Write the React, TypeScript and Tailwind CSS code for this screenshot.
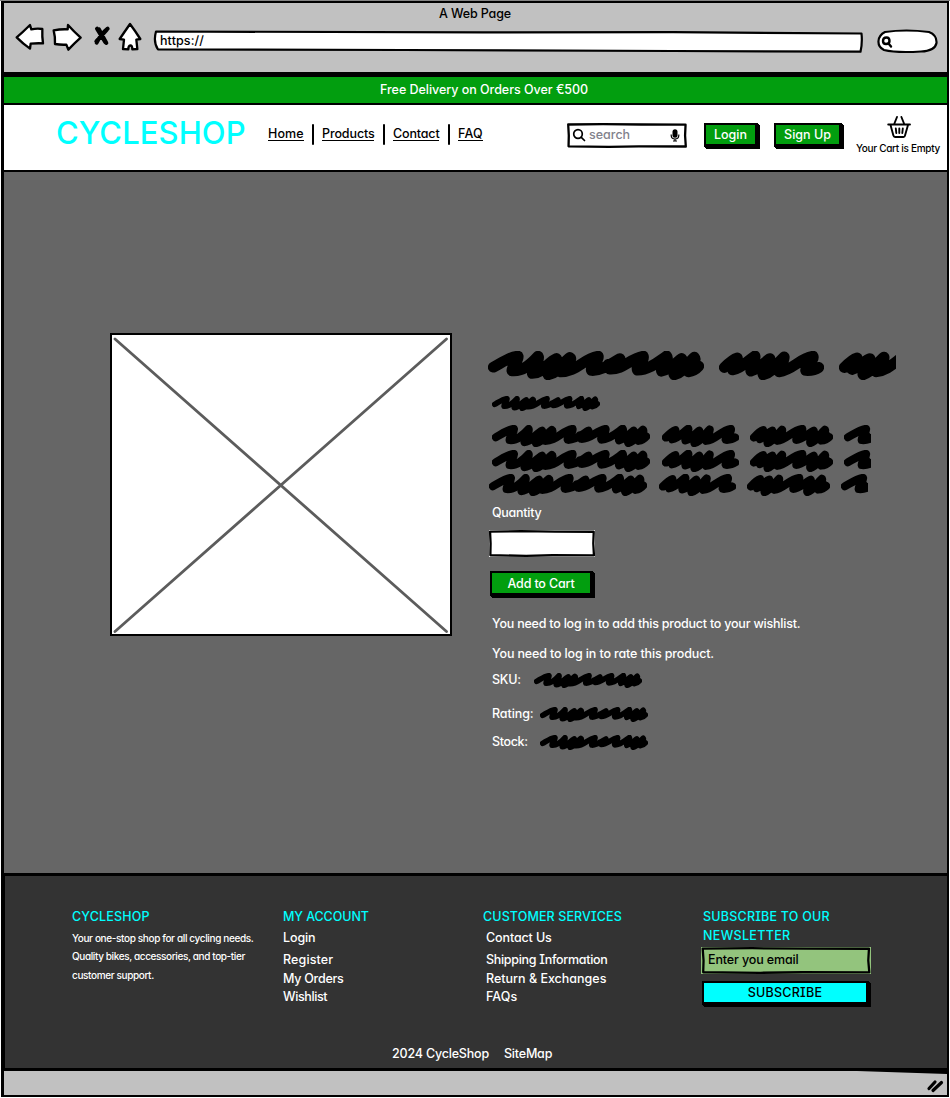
import type { ReactNode } from "react";

function T({ children, className = "" }: { children: string; className?: string }) {
  return <span className={`-mb-px block w-max shrink-0 whitespace-pre pt-px leading-4 ${className}`}>{children}</span>;
}

function Small({ children, className = "" }: { children: string; className?: string }) {
  return <span className={`block w-max shrink-0 whitespace-pre text-[10px] leading-4 ${className}`}>{children}</span>;
}

function Sketch({ fill = "#fff", className = "", children }: { fill?: string; className?: string; children?: ReactNode }) {
  return (
    <div className={`relative shrink-0 ${className}`}>
      <svg className="absolute inset-0 size-full overflow-visible" viewBox="0 0 100 100" preserveAspectRatio="none">
        <path
          d="M1 6 L30 4.5 L62 6 L98.800 6.500 L98.400 50 L99 94 L60 93.500 L35 95.500 L1.300 93.500 L1.500 50 Z"
          fill={fill}
          stroke="#000"
          strokeWidth="2.3"
          strokeLinejoin="round"
          vectorEffect="non-scaling-stroke"
        />
      </svg>
      <div className="relative flex h-full">{children}</div>
    </div>
  );
}

const WORDS = {
  long: {
    box: "25 47 647 88",
    d: "M41 96 C70 80 95 63 115 63 C118 75 95 95 97 107 C130 110 155 85 175 63 C182 75 155 105 158 115 C190 115 205 80 230 70 C240 85 200 105 205 119 C235 115 250 80 270 67 C285 75 235 100 240 110 C290 112 310 70 355 63 C358 80 330 90 335 106 C370 108 400 80 420 70 C425 85 385 95 390 102 C430 104 450 70 490 63 C495 80 465 90 473 105 C510 105 540 75 560 62 C570 75 540 95 545 108 C575 100 590 80 605 70 C615 80 575 105 583 119 C610 115 625 80 643 66 C655 80 615 100 625 110 C640 108 650 100 656 93 M175 94 L262 92 M552 88 L650 92 M385 88 L415 84",
  },
  medium: {
    box: "57 47 316 88",
    d: "M73 97 C90 80 105 70 112 68 C115 80 95 95 98 104 C125 100 145 75 165 62 C170 75 150 95 153 108 C180 100 195 80 210 70 C215 85 185 105 190 119 C220 112 235 80 253 65 C255 80 235 95 238 110 C280 105 300 68 340 63 C345 75 315 95 318 106 C335 107 350 102 357 97 M90 92 L115 86 M155 90 L245 90",
  },
  cut: {
    box: "418 47 170 88",
    d: "M434 97 C450 80 465 70 472 68 C475 80 455 95 457 103 C480 95 495 75 510 70 C515 85 485 105 490 119 C515 112 535 80 552 66 C555 80 525 95 530 110 C560 105 575 90 604 68 M450 92 L545 90",
  },
  double: {
    box: "0 47 341 88",
    d: "M16 97 C32 80 47 70 54 68 C57 80 39 95 41 103 C62 95 77 75 92 70 C97 85 67 105 72 119 C97 112 117 80 132 66 C137 80 107 95 112 110 C150 105 175 68 215 63 C218 78 190 90 190 106 C215 106 240 80 262 70 C268 85 240 105 248 119 C275 112 290 80 308 66 C316 80 285 98 292 109 C305 108 318 102 325 95 M32 92 L125 90 M240 92 L315 90",
  },
  stub: {
    box: "25 47 112 88",
    d: "M41 96 C70 80 95 63 115 63 C118 75 95 95 97 107 C115 109 130 104 145 95 M105 96 L118 92",
  },
};

function Scribble({ word, className }: { word: keyof typeof WORDS; className: string }) {
  return (
    <svg viewBox={WORDS[word].box} preserveAspectRatio="none" className={`block shrink-0 overflow-hidden ${className}`}>
      <path d={WORDS[word].d} fill="none" stroke="#000" strokeWidth="33" strokeLinecap="round" strokeLinejoin="round" />
    </svg>
  );
}

function TextRow({ className = "" }: { className?: string }) {
  return (
    <div className={`flex h-[22px] ${className}`}>
      <Scribble word="long" className="h-[22px] w-[158px]" />
      <Scribble word="medium" className="ml-[11.5px] h-[22px] w-[77px]" />
      <Scribble word="double" className="ml-[11px] h-[22px] w-[83px]" />
      <Scribble word="stub" className="ml-[11px] h-[22px] w-[27.5px]" />
    </div>
  );
}

function Button({ className, fill, children }: { className: string; fill: string; children: ReactNode }) {
  return (
    <div className={`flex shrink-0 justify-center border-2 border-b-[3px] border-r-[3px] border-black shadow-[1px_1px_0_#000,2px_2px_0_#000] ${fill} ${className}`}>
      {children}
    </div>
  );
}

function NavLink({ className, children }: { className: string; children: string }) {
  return (
    <a className={`mt-5 block h-4 shrink-0 whitespace-pre border-b border-black pt-px leading-[15px] ${className}`}>{children}</a>
  );
}

function Divider({ className }: { className: string }) {
  return <div className={`mt-[19px] h-[21px] w-[2px] shrink-0 rounded bg-black ${className}`} />;
}

function Chrome() {
  return (
    <div className="flex h-[69px] flex-col bg-[#c1c1c1]">
      <T className="ml-[435px] mt-[2px] tracking-[-0.12px]">A Web Page</T>
      <div className="flex">
        <svg className="ml-[10px] mt-[1px] h-[32px] w-[132px] shrink-0" viewBox="42 66 396 96" fill="#fff" stroke="#000" strokeWidth="7" strokeLinejoin="round" strokeLinecap="round">
          <path d="M50 112 Q68 97 90 75 L94 88 Q112 84 127 87 Q126 110 129 130 Q110 129 92 131 L90 146 Q70 132 50 112Z" />
          <path d="M161 91 Q182 87 203 88 L204 75 Q222 95 242 113 Q225 128 205 149 L199 134 Q182 135 165 132 Q166 110 161 91Z" />
          <path d="M291 86 L316 127 M323 86 Q303 102 290 128 M297 88 L319 129 M320 90 L289 124" strokeWidth="12" fill="none" />
          <path d="M390 72 Q405 92 421 117 L409 119 L412 147 L397 148 Q397 136 391 136 Q385 137 385 148 L369 147 L372 119 L359 117 Q374 95 390 72Z" />
        </svg>
        <div className="relative ml-[7px] mt-[8px] h-[24px] w-[710px] shrink-0">
          <svg className="absolute inset-0" width="710" height="24" fill="#fff" stroke="#000" strokeWidth="2.200" strokeLinejoin="round">
            <path d="M3 2.500 L330 3.400 L520 3.200 L708.500 4.500 Q709.500 14 707.500 22.700 L520 22 L250 21 L5 20.500 Q0 13 3 2.500Z" />
          </svg>
          <T className="relative ml-[7px] mt-[3px] tracking-[0.1px]">https://</T>
        </div>
        <svg className="ml-[13px] mt-[7px] h-[26px] w-[62px] shrink-0" viewBox="0 0 62 26" fill="#fff" stroke="#000" strokeWidth="2.200">
          <path d="M9 4 Q30 1 53 4 Q61 7 60.500 15 Q59 23 45 23.500 Q20 25 8 22 Q2 19 2.500 13 Q3 7 9 4Z" />
          <path d="M7 13 Q7 9.500 10.500 9.500 Q13.500 9.500 13.500 13 Q13.500 16 10 16 Q7 16 7 13Z M12.500 15.500 L15 18.500" strokeWidth="2.400" strokeLinecap="round" />
        </svg>
      </div>
    </div>
  );
}

function Header() {
  return (
    <header className="flex h-[65px] items-start bg-white">
      <div className="ml-[52px] mt-[12px] w-[190px] shrink-0 whitespace-pre text-[31px] leading-8 tracking-[0.08px] text-[#00ffff]">CYCLESHOP</div>
      <nav className="ml-[22px] flex items-start">
        <NavLink className="w-[36px] tracking-[0.1px]">Home</NavLink>
        <Divider className="ml-[8px]" />
        <NavLink className="ml-[8px] w-[52px] tracking-[-0.1px]">Products</NavLink>
        <Divider className="ml-[9px]" />
        <NavLink className="ml-[8px] w-[46px] tracking-[-0.15px]">Contact</NavLink>
        <Divider className="ml-[9px]" />
        <NavLink className="ml-[8px] w-[25px] tracking-[0.2px]">FAQ</NavLink>
      </nav>
      <div className="ml-auto flex items-start pr-[7px]">
        <Sketch className="mt-[18px] h-[25px] w-[120px]">
          <svg className="ml-[5px] mt-[5px] size-[14px] shrink-0" viewBox="0 0 14 14" fill="none" stroke="#000" strokeWidth="1.700" strokeLinecap="round">
            <circle cx="6" cy="6" r="4.300" />
            <path d="M9.300 9.300 L12.500 12.500" />
          </svg>
          <T className="ml-[3px] mt-[3px] text-[#82828c]">search</T>
          <svg className="absolute right-[7px] top-[6px] h-[13px] w-[10px]" viewBox="0 0 10 13">
            <rect x="2.500" y="0.300" width="5" height="8.400" rx="2.500" />
            <path d="M1.200 5.500 V6.500 Q1.300 10 5 10 Q8.700 10 8.800 6.500 V5.500 M5 10 V12 M3 12 H7" fill="none" stroke="#000" strokeWidth="1.200" />
          </svg>
        </Sketch>
        <Button fill="bg-[#029e0f]" className="ml-[17px] mt-[18px] h-6 w-[54px]">
          <T className="mt-px text-white">Login</T>
        </Button>
        <Button fill="bg-[#029e0f]" className="ml-[16px] mt-[18px] h-6 w-[68px]">
          <T className="mt-px text-white">Sign Up</T>
        </Button>
        <div className="ml-[14px] flex w-[84px] flex-col items-center">
          <svg className="ml-[2px] mt-[10px] h-[24px] w-[26px]" viewBox="0 0 26 24" fill="none" stroke="#000" strokeWidth="1.900" strokeLinecap="round" strokeLinejoin="round">
            <path d="M2.200 9.500 H24 M4.500 10 L7.400 20.600 Q7.800 22 9 22 H17.500 Q18.700 22 19 20.600 L22 10 M8.200 9 L11 2 M18.200 9 L15.400 2 M9.800 13.500 L10.300 18 M13.300 13.500 V18 M16.800 13.500 L16.300 18" />
          </svg>
          <Small className="mt-px tracking-[-0.3px]">Your Cart is Empty</Small>
        </div>
      </div>
    </header>
  );
}

function Detail({ label, className }: { label: string; className: string }) {
  return (
    <div className="ml-1 flex h-4 items-start">
      <div className={`shrink-0 ${className}`}>
        <T>{label}</T>
      </div>
      <Scribble word="long" className="mt-[2px] h-[15px] w-[108px]" />
    </div>
  );
}

function Product() {
  return (
    <main className="flex h-[701px] bg-[#666666]">
      <div className="ml-[106px] mt-[161px] h-[303px] w-[342px] shrink-0 border-2 border-black bg-white">
        <svg className="size-full" viewBox="0 0 338 299" stroke="#5c5c5c" strokeWidth="2.800" strokeLinecap="round">
          <path d="M3 4 L334.500 296.500 M334.500 4 L3 296.500" />
        </svg>
      </div>
      <section className="ml-[36px] flex flex-col pt-[179px] text-white">
        <div className="flex">
          <Scribble word="long" className="h-[29px] w-[216px]" />
          <Scribble word="medium" className="ml-[15px] h-[29px] w-[105px]" />
          <Scribble word="cut" className="ml-[15px] h-[29px] w-[57px]" />
        </div>
        <Scribble word="long" className="ml-1 mt-4 h-[15px] w-[108px]" />
        <TextRow className="ml-1 mt-[14px]" />
        <TextRow className="ml-1 mt-[3px]" />
        <TextRow className="ml-px mt-[2px]" />
        <T className="ml-1 mt-2 tracking-[-0.26px]">Quantity</T>
        <Sketch className="ml-px mt-[10px] h-[27px] w-[106px] bg-white" />
        <Button fill="bg-[#029e0f]" className="ml-[2px] mt-[14px] h-[25px] w-[103px]">
          <T className="mt-[2px] tracking-[-0.15px]">Add to Cart</T>
        </Button>
        <T className="ml-1 mt-[19px] tracking-[-0.22px]">You need to log in to add this product to your wishlist.</T>
        <T className="ml-1 mt-[14px] tracking-[-0.14px]">You need to log in to rate this product.</T>
        <div className="mt-[10px]">
          <Detail label="SKU:" className="w-[42px] tracking-[-0.25px]" />
        </div>
        <div className="mt-[18px]">
          <Detail label="Rating:" className="w-[48px] tracking-[-0.08px]" />
        </div>
        <div className="mt-[12px]">
          <Detail label="Stock:" className="w-[48px] tracking-[-0.36px]" />
        </div>
      </section>
    </main>
  );
}

function Footer() {
  return (
    <footer className="h-[192px] border-l border-black bg-[#333333] pl-[67px] pt-8 text-white">
      <div className="flex h-[137px]">
        <div className="w-[211px] shrink-0">
          <T className="tracking-[0.16px] text-[#00ffff]">CYCLESHOP</T>
          <Small className="mt-[6px] tracking-[-0.36px]">Your one-stop shop for all cycling needs.</Small>
          <Small className="mt-[2px] tracking-[-0.39px]">Quality bikes, accessories, and top-tier</Small>
          <Small className="mt-[3px] tracking-[-0.37px]">customer support.</Small>
        </div>
        <div className="w-[200px] shrink-0">
          <T className="tracking-[-0.08px] text-[#00ffff]">MY ACCOUNT</T>
          <T className="mt-[5px] tracking-[-0.1px]">Login</T>
          <T className="mt-[6px] tracking-[0.14px]">Register</T>
          <T className="mt-[3px] tracking-[-0.25px]">My Orders</T>
          <T className="mt-[2px] tracking-[-0.38px]">Wishlist</T>
        </div>
        <div className="w-[219px] shrink-0">
          <T className="tracking-[0.11px] text-[#00ffff]">CUSTOMER SERVICES</T>
          <div className="ml-[3px]">
            <T className="mt-[5px] tracking-[-0.12px]">Contact Us</T>
            <T className="mt-[6px] tracking-[-0.29px]">Shipping Information</T>
            <T className="mt-[3px]">Return & Exchanges</T>
            <T className="mt-[2px] tracking-[0.1px]">FAQs</T>
          </div>
        </div>
        <div className="shrink-0">
          <T className="ml-px tracking-[0.22px] text-[#00ffff]">SUBSCRIBE TO OUR</T>
          <T className="ml-px mt-[3px] tracking-[0.33px] text-[#00ffff]">NEWSLETTER</T>
          <Sketch fill="#93c47d" className="-ml-px mt-[4px] h-[27px] w-[170px] bg-[#93c47d]">
            <T className="ml-[7px] mt-[4px] tracking-[-0.13px] text-black">Enter you email</T>
          </Sketch>
          <Button fill="bg-[#00ffff]" className="mt-[7px] h-6 w-[167px]">
            <T className="mt-px tracking-[0.25px] text-black">SUBSCRIBE</T>
          </Button>
        </div>
      </div>
      <div className="flex">
        <div className="ml-[320px] w-[112px] shrink-0">
          <T className="tracking-[-0.18px]">2024 CycleShop</T>
        </div>
        <T className="tracking-[-0.2px]">SiteMap</T>
      </div>
    </footer>
  );
}

export default function App() {
  return (
    <div className="h-[1098px] w-[950px] border-t border-[#848484] bg-white pl-px font-['Inter','Liberation_Sans',sans-serif] text-[12.5px] font-medium text-black [font-feature-settings:'cv11','cv08']">
      <div className="w-[948px] border-b-2 border-l-[3px] border-r-2 border-t-2 border-black">
        <Chrome />
        <div className="h-[5px] bg-black" />
        <div className="h-[26px] bg-[#029e0f] pt-[4px]">
          <T className="ml-[376px] tracking-[-0.03px] text-white">Free Delivery on Orders Over €500</T>
        </div>
        <div className="h-[2px] bg-black" />
        <Header />
        <div className="h-[2px] bg-black" />
        <Product />
        <div className="h-[3px] bg-black" />
        <Footer />
        <div className="h-[3px] bg-black" />
        <div className="relative flex h-[24px] justify-end bg-[#c1c1c1]">
          <svg className="absolute right-0 top-0" width="90" height="3">
            <path d="M0 0 L90 3 V0 Z" />
          </svg>
          <svg className="mr-[2px] mt-[7px] h-[15px] w-[19px]" viewBox="0 0 19 15" stroke="#000" strokeWidth="3.200" strokeLinecap="round">
            <path d="M3 10.500 L9 4 M7 12.500 L15.500 4.500" />
          </svg>
        </div>
      </div>
    </div>
  );
}
